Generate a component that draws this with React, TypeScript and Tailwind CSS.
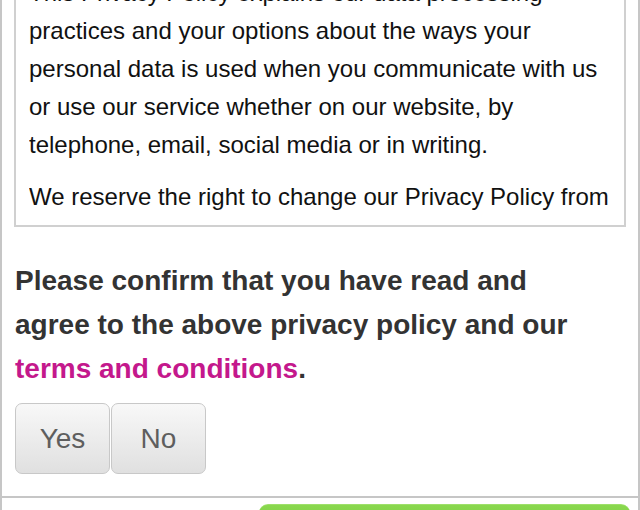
import React from 'react';

export default function App() {
  return (
    <div className="h-[510px] overflow-hidden bg-white font-['Liberation_Sans',Arial,sans-serif]">
      <div className="border-x-2 border-[#c6c6c6] min-h-[600px]">
        {/* Policy text box */}
        <div className="mx-3 mt-[-40px] border-2 border-[#d0d0d0] px-[13px] pb-2">
          <div className="h-[255px] overflow-hidden pt-3 text-[24px] leading-[38px] text-[#111]">
            <p className="mb-[14px]">
              This Privacy Policy explains our data processing practices and your options about the ways your
              personal data is used when you communicate with us or use our service whether on our website, by
              telephone, email, social media or in writing.
            </p>
            <p>
              We reserve the right to change our Privacy Policy from time to time and any changes will be posted
              on this page.
            </p>
          </div>
        </div>

        {/* Confirmation */}
        <div className="px-[13px] mt-8">
          <p className="max-w-[570px] text-[28px] font-bold leading-[44px] text-[#333]">
            Please confirm that you have read and agree to the above privacy policy and our{' '}
            <a href="#" className="text-[#c4188c]">terms and conditions</a>.
          </p>
          <div className="mt-3 flex gap-[1px]">
            {['Yes', 'No'].map((label) => (
              <button
                key={label}
                className="w-[95px] h-[71px] rounded-[7px] border border-[#c8c8c8] bg-gradient-to-b from-[#f8f8f8] to-[#e0e0e0] text-[28px] text-[#5e5e5e]"
              >
                {label}
              </button>
            ))}
          </div>
        </div>

        {/* Footer */}
        <div className="mt-[22px] border-t-2 border-[#c6c6c6] pt-[6px] flex justify-end pr-2">
          <button className="w-[371px] h-[56px] rounded-t-[9px] bg-gradient-to-b from-[#8ad84f] to-[#5fc21f] border-t border-[#9ee06a]" />
        </div>
      </div>
    </div>
  );
}
